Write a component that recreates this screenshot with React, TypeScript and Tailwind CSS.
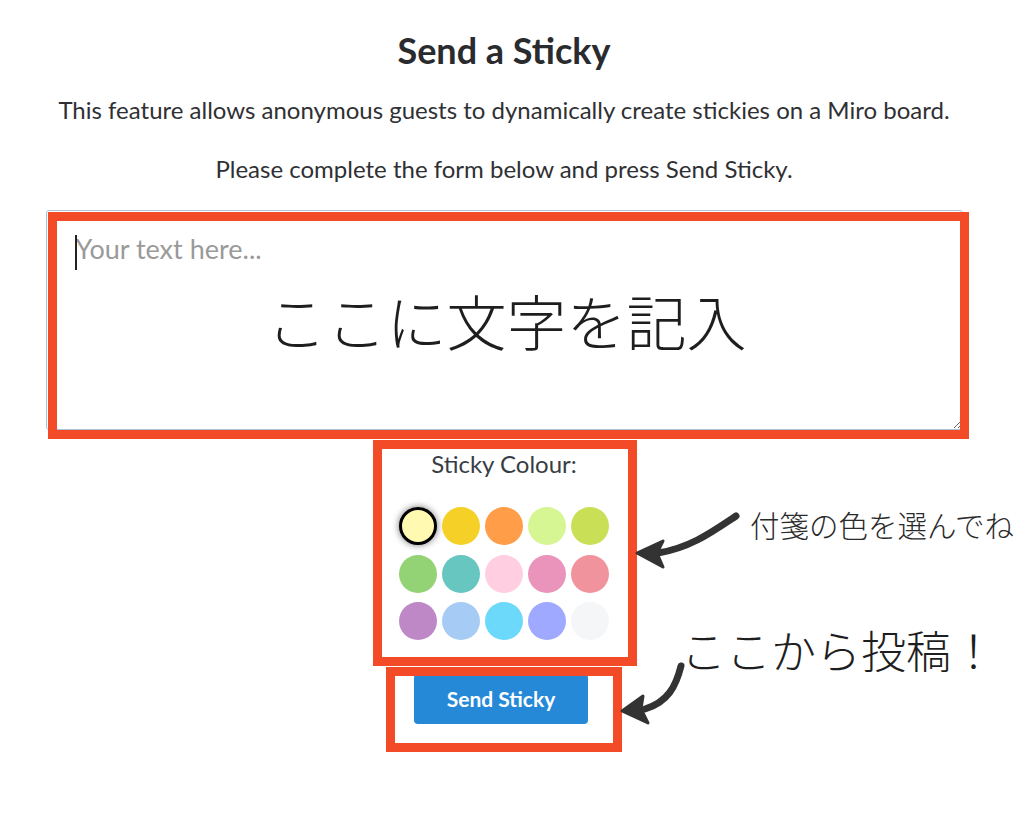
import React from 'react';

const COLOURS = [
  '#fff9b1', '#f5d128', '#ff9d48', '#d5f692', '#c9df56',
  '#93d275', '#67c6c0', '#ffcee0', '#ea94bb', '#f0939d',
  '#be88c7', '#a6ccf5', '#6cd8fa', '#9ea9ff', '#f5f6f8',
];

const JP = '"Noto Sans CJK JP", "Noto Sans", sans-serif';

export default function App() {
  const [selected, setSelected] = React.useState(0);

  return (
    <div className="relative w-[1008px] min-h-[819px] bg-white text-[#2f3033] font-['Lato',sans-serif]">
      <div className="flex flex-col items-center pt-[28px]">
        <h1 className="text-[36px] leading-[44px] font-bold text-[#2a2b2e]">Send a Sticky</h1>
        <p className="mt-[24px] text-[24px] leading-[28px]">
          This feature allows anonymous guests to dynamically create stickies on a Miro board.
        </p>
        <p className="mt-[31px] text-[24px] leading-[28px]">Please complete the form below and press Send Sticky.</p>

        <div className="relative mt-[27px]">
          <textarea
            className="block w-[917px] h-[220px] border border-[#a9c3d6] rounded-[3px] px-[29px] py-[21px] text-[27px] leading-[34px] placeholder:text-[#9a9a9a] outline-none resize-y"
            placeholder="Your text here..."
          />
          {/* focused caret */}
          <span className="absolute left-[29px] top-[25px] w-[2px] h-[35px] bg-[#222]" />
        </div>

        <p className="mt-[21px] text-[24px] leading-[26px] text-[#383d45]">Sticky Colour:</p>
        <div className="mt-[30px] grid grid-cols-5 gap-x-[5px] gap-y-[9.5px]">
          {COLOURS.map((c, i) => (
            <button
              key={c}
              onClick={() => setSelected(i)}
              className={`w-[38px] h-[38px] rounded-full ${i === selected ? 'border-[3.5px] border-black shadow-[0_0_7px_rgba(0,0,0,0.55)]' : ''}`}
              style={{ backgroundColor: c }}
            />
          ))}
        </div>

        <button className="mt-[34px] mr-[6px] w-[174px] h-[50px] rounded-[4px] bg-[#2589d8] text-white font-bold text-[21px]">
          Send Sticky
        </button>
      </div>

      {/* annotations */}
      <div className="absolute left-[48px] top-[212px] w-[921px] h-[227px] border-[9px] border-[#f34a27] flex items-center justify-center">
        <span className="mt-[-12px] ml-[-4px] text-[60px] text-[#1e1e1e] font-light" style={{ fontFamily: JP }}>ここに文字を記入</span>
      </div>
      <div className="absolute left-[373px] top-[440px] w-[264px] h-[226px] border-[9px] border-[#f34a27]" />
      <div className="absolute left-[386px] top-[667px] w-[236px] h-[85px] border-[9px] border-[#f34a27]" />

      <span className="absolute left-[750px] top-[505px] text-[29.5px] leading-[38px] text-[#2a2a2a] font-light whitespace-nowrap" style={{ fontFamily: JP }}>
        付箋の色を選んでね
      </span>
      <span className="absolute left-[681px] top-[622px] text-[45px] leading-[56px] text-[#1e1e1e] font-light whitespace-nowrap" style={{ fontFamily: JP }}>
        ここから投稿！
      </span>

      <svg className="absolute left-0 top-0 pointer-events-none" width="1024" height="819">
        <path d="M736 516 C712 532 690 548 658 553" stroke="#333" strokeWidth="7" fill="none" strokeLinecap="round" />
        <path d="M637 553 L663 541 L657 553 L663 567 Z" fill="#333" stroke="#333" strokeWidth="3" strokeLinejoin="round" />
        <path d="M681 666 C676 686 668 702 645 709" stroke="#333" strokeWidth="7" fill="none" strokeLinecap="round" />
        <path d="M622 711 L643 696 L641 709 L648 723 Z" fill="#333" stroke="#333" strokeWidth="3" strokeLinejoin="round" />
      </svg>
    </div>
  );
}
